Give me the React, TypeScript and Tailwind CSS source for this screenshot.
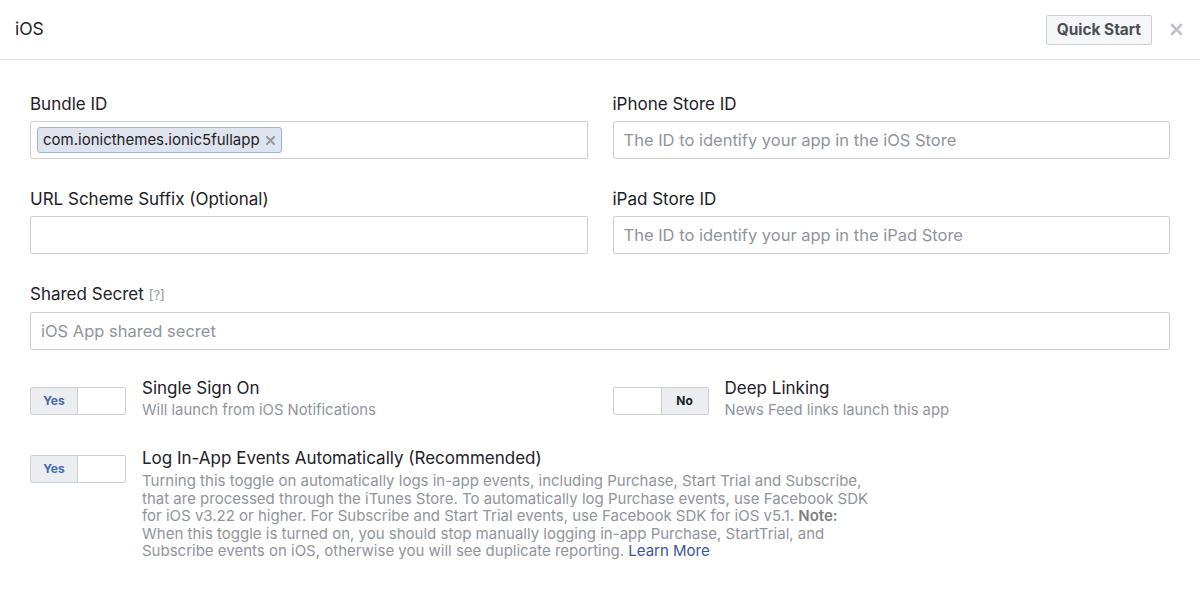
import React from "react";

const font = { fontFamily: 'Inter, "Liberation Sans", Arial, sans-serif' };

const Field = ({ label, placeholder, children }: { label: React.ReactNode; placeholder?: string; children?: React.ReactNode }) => (
  <div className="flex flex-col">
    <div className="text-[17px] leading-[20px] text-[#1d2129] mb-[7px]">{label}</div>
    <div className="h-[38px] border border-[#ccd0d5] rounded-[2px] bg-white flex items-center px-[6px]">
      {children ?? <span className="text-[16.5px] text-[#90949c] pl-[4px]">{placeholder}</span>}
    </div>
  </div>
);

const Toggle = ({ on }: { on: boolean }) => (
  <div className="flex w-[96px] h-[28px] border border-[#ccd0d5] rounded-[2px] overflow-hidden shrink-0 bg-white">
    {on ? (
      <>
        <div className="w-[47px] bg-[#ebedf0] border-r border-[#ccd0d5] flex items-center justify-center text-[12px] font-bold text-[#4267b2]">Yes</div>
        <div className="flex-1" />
      </>
    ) : (
      <>
        <div className="flex-1" />
        <div className="w-[47px] bg-[#ebedf0] border-l border-[#ccd0d5] flex items-center justify-center text-[12px] font-bold text-[#1d2129]">No</div>
      </>
    )}
  </div>
);

export default function App() {
  return (
    <div className="w-[1200px] h-[589px] bg-white" style={font}>
      <div className="h-[60px] border-b border-[#e5e5e5] flex items-center justify-between pl-[15px] pr-[16px]">
        <div className="text-[17.5px] text-[#1d2129]">iOS</div>
        <div className="flex items-center gap-[18px]">
          <button className="h-[30px] px-[10px] border border-[#ccd0d5] rounded-[2px] bg-[#f5f6f7] text-[15.4px] font-bold text-[#4b4f56]">
            Quick Start
          </button>
          <svg width="13" height="13" viewBox="0 0 13 13" className="mr-[1px]">
            <path d="M2 2L11 11M11 2L2 11" stroke="#bec2c9" strokeWidth="2.6" strokeLinecap="round" />
          </svg>
        </div>
      </div>

      <div className="px-[30px] pt-[34px]">
        <div className="grid grid-cols-2 gap-x-[25px] gap-y-[30px]">
          <Field label="Bundle ID">
            <div className="h-[26px] flex items-center gap-[6px] pl-[5px] pr-[6px] bg-[#dfe3ee] border border-[#9cb4d8] rounded-[3px] text-[15px] text-[#1d2129]">
              com.ionicthemes.ionic5fullapp
              <svg width="9" height="9" viewBox="0 0 9 9">
                <path d="M1 1L8 8M8 1L1 8" stroke="#9197a3" strokeWidth="2" strokeLinecap="round" />
              </svg>
            </div>
          </Field>
          <Field label="iPhone Store ID" placeholder="The ID to identify your app in the iOS Store" />
          <Field label="URL Scheme Suffix (Optional)" placeholder="" />
          <Field label="iPad Store ID" placeholder="The ID to identify your app in the iPad Store" />
          <div className="col-span-2">
            <Field
              label={
                <>
                  Shared Secret <span className="text-[13px] text-[#90949c]">[?]</span>
                </>
              }
              placeholder="iOS App shared secret"
            />
          </div>
        </div>

        <div className="grid grid-cols-2 gap-x-[25px] mt-[37px]">
          <div className="flex gap-[16px]">
            <Toggle on />
            <div className="-mt-[10px]">
              <div className="text-[17px] leading-[22px] text-[#1d2129]">Single Sign On</div>
              <div className="text-[14.8px] leading-[22px] text-[#90949c]">Will launch from iOS Notifications</div>
            </div>
          </div>
          <div className="flex gap-[16px]">
            <Toggle on={false} />
            <div className="-mt-[10px]">
              <div className="text-[17px] leading-[22px] text-[#1d2129]">Deep Linking</div>
              <div className="text-[14.8px] leading-[22px] text-[#90949c]">News Feed links launch this app</div>
            </div>
          </div>
        </div>

        <div className="flex gap-[16px] mt-[34px]">
          <Toggle on />
          <div className="-mt-[8px]">
            <div className="text-[17px] leading-[22px] text-[#1d2129]">Log In-App Events Automatically (Recommended)</div>
            <div className="text-[15px] leading-[17.5px] text-[#90949c] mt-[3px] whitespace-nowrap">
              Turning this toggle on automatically logs in-app events, including Purchase, Start Trial and Subscribe,
              <br />
              that are processed through the iTunes Store. To automatically log Purchase events, use Facebook SDK
              <br />
              for iOS v3.22 or higher. For Subscribe and Start Trial events, use Facebook SDK for iOS v5.1.{" "}
              <span className="font-semibold text-[#7f7f7f]">Note:</span>
              <br />
              When this toggle is turned on, you should stop manually logging in-app Purchase, StartTrial, and
              <br />
              Subscribe events on iOS, otherwise you will see duplicate reporting. <a className="text-[#365899]">Learn More</a>
            </div>
          </div>
        </div>
      </div>
    </div>
  );
}
